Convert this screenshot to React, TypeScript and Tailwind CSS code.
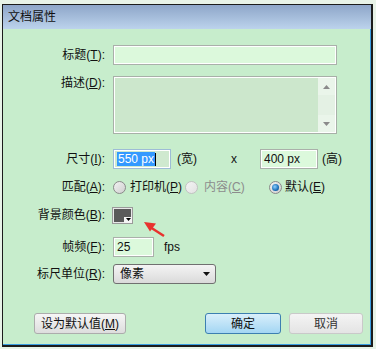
import React from "react";

const F = "font-['Liberation_Sans','Noto_Sans_CJK_SC',sans-serif]";

function Acc({ c }: { c: string }) {
  return (
    <>
      (<span className="underline underline-offset-[1px]">{c}</span>)
    </>
  );
}

function Label({ text, acc, className = "" }: { text: string; acc: string; className?: string }) {
  return (
    <div className={`w-[102px] shrink-0 text-right text-[12px] text-[#111] ${className}`}>
      {text}
      <Acc c={acc} />:
    </div>
  );
}

function Radio({ checked = false, disabled = false }: { checked?: boolean; disabled?: boolean }) {
  return (
    <div
      className={`w-[13px] h-[13px] rounded-full border flex items-center justify-center shrink-0 ${
        disabled ? "border-[#c2c2c2] bg-gradient-to-br from-[#f4f4f4] to-[#e2e2e2]" : "border-[#8a8a8a] bg-gradient-to-br from-[#f2f2f2] to-[#cfcfcf]"
      }`}
    >
      {checked && (
        <div className="w-[7px] h-[7px] rounded-full bg-[radial-gradient(circle_at_40%_40%,#8fd0ff,#1a6fb8_60%,#0d3e6e)]" />
      )}
    </div>
  );
}

export default function App() {
  return (
    <div className={`w-[376px] h-[349px] bg-[#e8f3e8] pl-[2px] pt-[4px] ${F} relative overflow-hidden`}>
      <div className="w-[371px] h-[343px] border border-[#1c1c1c] border-r-2 border-b-2 flex flex-col">
        {/* title bar */}
        <div className="h-[24px] bg-gradient-to-b from-[#8ea6c9] to-[#bcd3ec] flex items-center pl-[5px] text-[12px] text-[#111] shrink-0">
          文档属性
        </div>
        {/* body */}
        <div className="flex-1 bg-[#c7edcc] border-r border-b border-[#3a9de0] flex flex-col">
          {/* title row */}
          <div className="flex items-center h-[20px] mt-[16px]">
            <Label text="标题" acc="T" />
            <div className="ml-[8px] w-[224px] h-[20px] bg-[#dcf9dc] border border-[#aab0aa] shadow-[inset_0_0_0_1px_#fff]" />
          </div>
          {/* desc row */}
          <div className="flex items-start mt-[11px]">
            <Label text="描述" acc="D" className="leading-[14px] pt-[0px]" />
            <div className="ml-[8px] w-[224px] h-[58px] bg-[#cce7cc] border border-[#a8b0a8] shadow-[inset_0_0_0_1px_#fff] flex justify-end p-[1px]">
              <div className="w-[17px] h-full bg-[#e4f1e4] flex flex-col justify-between items-center">
                <div className="h-[17px] w-full flex items-center justify-center bg-[#eaf5ea]">
                  <svg width="7" height="4" viewBox="0 0 7 4"><path d="M0 4 L3.5 0 L7 4Z" fill="#8a8a8a" /></svg>
                </div>
                <div className="h-[17px] w-full flex items-center justify-center bg-[#eaf5ea]">
                  <svg width="7" height="4" viewBox="0 0 7 4"><path d="M0 0 L3.5 4 L7 0Z" fill="#8a8a8a" /></svg>
                </div>
              </div>
            </div>
          </div>
          {/* size row */}
          <div className="flex items-center h-[20px] mt-[15px] text-[12px] text-[#111]">
            <Label text="尺寸" acc="I" />
            <div className="ml-[8px] w-[58px] h-[20px] bg-[#cfe9cf] border border-[#9dbcd6] shadow-[inset_0_0_0_1px_#fff] flex items-center pl-[3px]">
              <span className="bg-[#3399ff] text-white leading-[14px] px-[1px]">550 px</span>
              <span className="w-[1px] h-[13px] bg-black" />
            </div>
            <div className="ml-[6px] w-[54px]">(宽)</div>
            <div className="w-[29px]">x</div>
            <div className="w-[58px] h-[20px] bg-[#dcf9dc] border border-[#aab0aa] shadow-[inset_0_0_0_1px_#fff] flex items-center pl-[3px]">
              400 px
            </div>
            <div className="ml-[4px]">(高)</div>
          </div>
          {/* match row */}
          <div className="flex items-center h-[20px] mt-[8px] text-[12px] text-[#111]">
            <Label text="匹配" acc="A" />
            <div className="ml-[8px] w-[72px] flex items-center gap-[4px]">
              <Radio />
              <span>
                打印机<Acc c="P" />
              </span>
            </div>
            <div className="w-[84px] flex items-center gap-[6px] text-[#8c8c8c]">
              <Radio disabled />
              <span>
                内容<Acc c="C" />
              </span>
            </div>
            <div className="flex items-center gap-[3px]">
              <Radio checked />
              <span>
                默认<Acc c="E" />
              </span>
            </div>
          </div>
          {/* bg color row */}
          <div className="flex items-center h-[20px] mt-[8px]">
            <Label text="背景颜色" acc="B" />
            <div className="ml-[7px] w-[21px] h-[17px] border border-[#9a9a9a] bg-[#5a5a5a] shadow-[inset_0_0_0_1px_#e8e8e8] relative">
              <div className="absolute right-0 bottom-0 w-[8px] h-[6px] bg-[#f4f4f4] flex items-center justify-center">
                <svg width="5" height="3" viewBox="0 0 5 3"><path d="M0 0 L2.5 3 L5 0Z" fill="#000" /></svg>
              </div>
            </div>
          </div>
          {/* fps row */}
          <div className="flex items-center h-[20px] mt-[12px] text-[12px] text-[#111]">
            <Label text="帧频" acc="F" />
            <div className="ml-[8px] w-[41px] h-[20px] bg-[#dcf9dc] border border-[#aab0aa] shadow-[inset_0_0_0_1px_#fff] flex items-center pl-[3px]">
              25
            </div>
            <div className="ml-[10px]">fps</div>
          </div>
          {/* ruler row */}
          <div className="flex items-center h-[20px] mt-[7px] text-[12px] text-[#111]">
            <Label text="标尺单位" acc="R" />
            <div className="ml-[8px] w-[103px] h-[20px] rounded-[3px] border border-[#707070] bg-gradient-to-b from-[#f4f4f4] to-[#dadada] flex items-center justify-between pl-[6px] pr-[5px]">
              <span>像素</span>
              <svg width="7" height="4" viewBox="0 0 7 4"><path d="M0 0 L3.5 4 L7 0Z" fill="#111" /></svg>
            </div>
          </div>
          {/* buttons */}
          <div className="flex items-center h-[21px] mt-[29px] text-[12px] text-[#111]">
            <div className="ml-[31px] w-[92px] h-[21px] rounded-[3px] border border-[#acacac] bg-gradient-to-b from-[#f6f6f6] to-[#dddddd] flex items-center justify-center">
              <span>
                设为默认值<Acc c="M" />
              </span>
            </div>
            <div className="ml-[79px] w-[76px] h-[21px] rounded-[3px] border border-[#3c7fb1] bg-gradient-to-b from-[#d9effb] to-[#a3d6f3] flex items-center justify-center">
              确定
            </div>
            <div className="ml-[8px] w-[74px] h-[21px] rounded-[3px] border border-[#c9c9c9] bg-gradient-to-b from-[#f4f4f4] to-[#e4e4e4] flex items-center justify-center text-[#333]">
              取消
            </div>
          </div>
        </div>
      </div>
      {/* red arrow overlay */}
      <svg className="absolute left-0 top-0 pointer-events-none" width="376" height="349">
        <line x1="164" y1="236" x2="150" y2="227" stroke="#e8322e" strokeWidth="2.5" />
        <path d="M144 222 L156 223.5 L150 231.5 Z" fill="#e8322e" />
      </svg>
    </div>
  );
}
